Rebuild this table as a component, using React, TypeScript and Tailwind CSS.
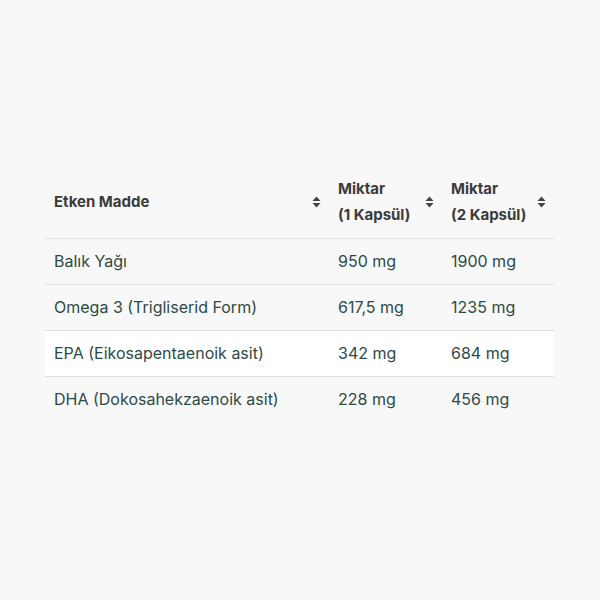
const rows = [
  { name: "Balık Yağı", one: "950 mg", two: "1900 mg" },
  { name: "Omega 3 (Trigliserid Form)", one: "617,5 mg", two: "1235 mg" },
  { name: "EPA (Eikosapentaenoik asit)", one: "342 mg", two: "684 mg" },
  { name: "DHA (Dokosahekzaenoik asit)", one: "228 mg", two: "456 mg" },
];

function SortIcon() {
  return (
    <svg width="9" height="12" viewBox="0 0 9 12" className="shrink-0">
      <path d="M4.5 0.5 L8.5 5 H0.5 Z" fill="#444" />
      <path d="M4.5 11.5 L8.5 7 H0.5 Z" fill="#444" />
    </svg>
  );
}

function HeadCell({ lines }: { lines: string[] }) {
  return (
    <th className="pl-[9px] pr-[8px] py-[10px] text-left align-middle font-bold">
      <div className="flex items-center justify-between gap-1">
        <div className="leading-[26px] whitespace-nowrap">
          {lines.map((l) => (
            <div key={l}>{l}</div>
          ))}
        </div>
        <SortIcon />
      </div>
    </th>
  );
}

export default function App() {
  return (
    <div
      className="min-h-screen bg-[#f8f8f8] pt-[166px] px-[45px]"
      style={{ fontFamily: "Inter, 'Noto Sans', sans-serif" }}
    >
      <table className="w-[509px] table-fixed border-collapse text-[16px]">
        <colgroup>
          <col className="w-[284px]" />
          <col className="w-[113px]" />
          <col className="w-[112px]" />
        </colgroup>
        <thead>
          <tr className="border-b border-[#dedede] text-[#3b3b3b] text-[15px]">
            <HeadCell lines={["Etken Madde"]} />
            <HeadCell lines={["Miktar", "(1 Kapsül)"]} />
            <HeadCell lines={["Miktar", "(2 Kapsül)"]} />
          </tr>
        </thead>
        <tbody className="text-[#2e4a44]">
          {rows.map((r, i) => (
            <tr
              key={r.name}
              className={`${i < rows.length - 1 ? "border-b border-[#dedede]" : ""} ${
                i === 2 ? "bg-white" : ""
              }`}
            >
              <td className="pl-[9px] py-[11px] leading-[23px]">{r.name}</td>
              <td className="pl-[9px] py-[11px] leading-[23px]">{r.one}</td>
              <td className="pl-[9px] py-[11px] leading-[23px]">{r.two}</td>
            </tr>
          ))}
        </tbody>
      </table>
    </div>
  );
}
